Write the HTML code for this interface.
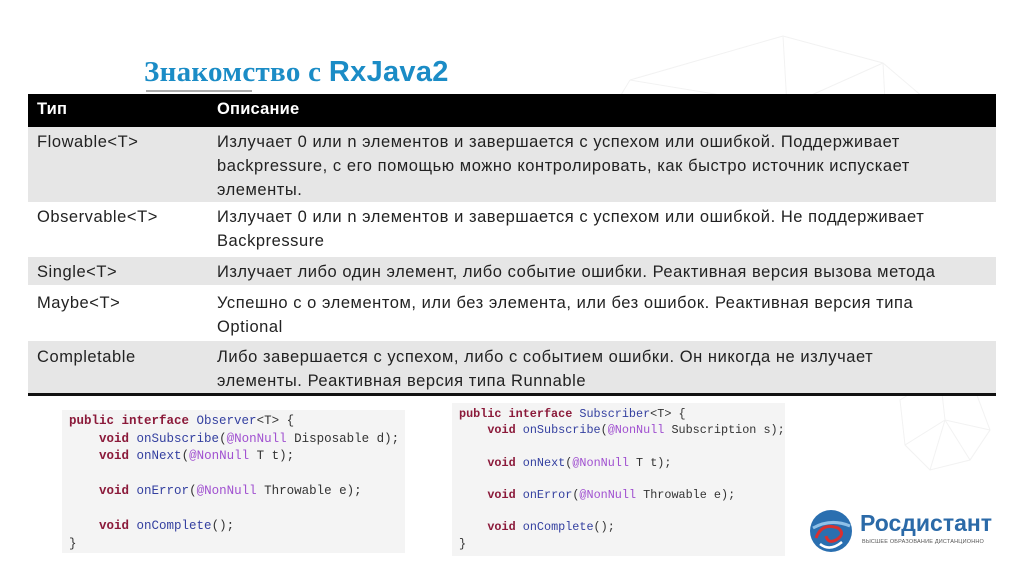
<!DOCTYPE html>
<html><head><meta charset="utf-8"><style>
*{margin:0;padding:0;box-sizing:border-box}
body{width:1024px;height:574px;background:#fff;position:relative;overflow:hidden;font-family:"Liberation Sans","DejaVu Sans",sans-serif}
.a{position:absolute}
.title{left:144px;top:56px;font-family:"Liberation Serif",serif;font-weight:bold;font-size:29px;color:#1b8cc6;letter-spacing:0.3px}
.title span{font-family:"Liberation Sans",sans-serif}
.row{position:absolute;left:28px;width:968px;font-size:16.5px;color:#222;line-height:24px;white-space:nowrap;letter-spacing:0.55px}
.row .c1{position:absolute;left:9px;top:3px}
.row .c2{position:absolute;left:189px;top:3px}
.hdr{background:#000;color:#fff;font-weight:bold;letter-spacing:0.2px}
.g{background:#e6e6e6}
.code{position:absolute;background:#f4f4f4;font-family:"Liberation Mono",monospace;font-size:12.5px;white-space:pre;color:#333}
.k{color:#8b1a3a;font-weight:bold}
.f{color:#3440a0}
.n{color:#a050d0}
</style></head><body>
<svg class="a" style="left:600px;top:20px" width="420" height="480" viewBox="0 0 420 480" fill="none" stroke="#f2f2f2" stroke-width="1">
<path d="M30 60 L183 16 L283 43 L350 100 M30 60 L187 86 L283 43 M183 16 L187 86 M30 60 L0 110 M283 43 L287 120"/>
<path d="M300 380 L340 355 L375 370 L390 410 L370 440 L330 450 L305 425 Z M340 355 L345 400 L390 410 M345 400 L305 425 M345 400 L330 450 M345 400 L370 440"/>
</svg>
<div class="a title">Знакомство с <span>RxJava2</span></div>
<div class="a" style="left:146px;top:90px;width:106px;height:2px;background:#aaa"></div>

<div class="row hdr" style="top:94px;height:33px"><div class="c1">Тип</div><div class="c2">Описание</div></div>
<div class="row g" style="top:127px;height:75px"><div class="c1">Flowable&lt;T&gt;</div><div class="c2">Излучает 0 или n элементов и завершается с успехом или ошибкой. Поддерживает<br>backpressure, с его помощью можно контролировать, как быстро источник испускает<br>элементы.</div></div>
<div class="row" style="top:202px;height:55px"><div class="c1">Observable&lt;T&gt;</div><div class="c2">Излучает 0 или n элементов и завершается с успехом или ошибкой. Не поддерживает<br>Backpressure</div></div>
<div class="row g" style="top:257px;height:28px"><div class="c1">Single&lt;T&gt;</div><div class="c2">Излучает либо один элемент, либо событие ошибки. Реактивная версия вызова метода</div></div>
<div class="row" style="top:285px;height:56px"><div class="c1" style="top:6px">Maybe&lt;T&gt;</div><div class="c2" style="top:6px">Успешно с о элементом, или без элемента, или без ошибок. Реактивная версия типа<br>Optional</div></div>
<div class="row g" style="top:341px;height:52px"><div class="c1" style="top:4px">Completable</div><div class="c2" style="top:4px">Либо завершается с успехом, либо с событием ошибки. Он никогда не излучает<br>элементы. Реактивная версия типа Runnable</div></div>
<div class="a" style="left:28px;top:393px;width:968px;height:3px;background:#111"></div>

<div class="code" style="left:62px;top:410px;width:343px;height:143px;padding:3px 0 0 7px;line-height:17.5px"><span class="k">public interface</span> <span class="f">Observer</span>&lt;T&gt; {
    <span class="k">void</span> <span class="f">onSubscribe</span>(<span class="n">@NonNull</span> Disposable d);
    <span class="k">void</span> <span class="f">onNext</span>(<span class="n">@NonNull</span> T t);

    <span class="k">void</span> <span class="f">onError</span>(<span class="n">@NonNull</span> Throwable e);

    <span class="k">void</span> <span class="f">onComplete</span>();
}</div>
<div class="code" style="left:452px;top:403px;width:333px;height:153px;padding:3px 0 0 7px;line-height:16.2px;font-size:11.8px"><span class="k">public interface</span> <span class="f">Subscriber</span>&lt;T&gt; {
    <span class="k">void</span> <span class="f">onSubscribe</span>(<span class="n">@NonNull</span> Subscription s);

    <span class="k">void</span> <span class="f">onNext</span>(<span class="n">@NonNull</span> T t);

    <span class="k">void</span> <span class="f">onError</span>(<span class="n">@NonNull</span> Throwable e);

    <span class="k">void</span> <span class="f">onComplete</span>();
}</div>

<svg class="a" style="left:808px;top:508px" width="46" height="46" viewBox="0 0 46 46">
<circle cx="23" cy="23" r="21" fill="#2a6fb0"/>
<path d="M5 20 Q23 10 42 18" stroke="#8fc0e8" stroke-width="3" fill="none"/>
<path d="M8 30 Q14 14 30 20 Q38 26 28 32 Q20 36 18 28" stroke="#d8302f" stroke-width="3" fill="none"/>
<path d="M12 36 Q22 44 34 34" stroke="#fff" stroke-width="2.5" fill="none"/>
</svg>
<div class="a" style="left:860px;top:510px;font-size:23px;font-weight:bold;color:#2b6aa8">Росдистант</div>
<div class="a" style="left:862px;top:539px;font-size:5.5px;color:#555;letter-spacing:0.2px">ВЫСШЕЕ ОБРАЗОВАНИЕ ДИСТАНЦИОННО</div>
</body></html>
